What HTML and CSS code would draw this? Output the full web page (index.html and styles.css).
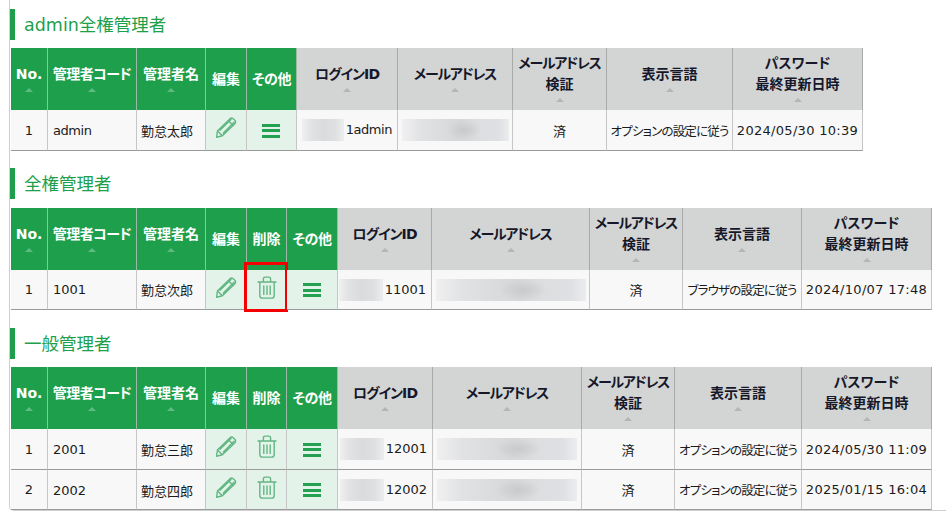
FILE: index.html
```html
<!DOCTYPE html>
<html lang="ja">
<head>
<meta charset="utf-8">
<title>管理者一覧</title>
<link rel="stylesheet" href="styles.css">
</head>
<body>
<svg class="defs" width="0" height="0" aria-hidden="true">
  <symbol id="pencil" viewBox="0 0 22 21">
    <path d="M2.4 14 14.8 1.9c1-1 2.3-1 3.4-.1l1.6 1.5c1.1 1.1 1.1 2.4.1 3.4L7.4 18.8 1.6 20.2z M2.4 14l5 4.8 M13.2 3.5l5 4.9 M5 13.2 16 2.6 M8.4 16 19 5.2"/>
  </symbol>
  <symbol id="trash" viewBox="0 0 20 23">
    <path d="M1 6h18 M6.4 5.6V2.8c0-1 .7-1.7 1.7-1.7h3.8c1 0 1.7.7 1.7 1.7v2.8 M2.8 6.2v13.2c0 1.8 1.1 2.7 2.6 2.7h9.2c1.5 0 2.6-.9 2.6-2.7V6.2 M6.8 10v8.4 M10 10v8.4 M13.2 10v8.4"/>
  </symbol>
</svg>
<main class="panel">
  <section class="group">
    <h2 class="title">admin全権管理者</h2>
    <table class="list list-a">
      <colgroup>
        <col class="c37"><col class="c89"><col class="c69"><col class="c41"><col class="c50"><col class="c101"><col class="c115"><col class="c94"><col class="c126"><col class="c130">
      </colgroup>
      <thead>
        <tr>
          <th class="g">No.<i class="sort"></i></th>
          <th class="g"><span class="t05">管理者コード</span><i class="sort"></i></th>
          <th class="g">管理者名<i class="sort"></i></th>
          <th class="g">編集</th>
          <th class="g"><span class="t05">その他</span></th>
          <th><span class="t10">ログインID</span><i class="sort"></i></th>
          <th><span class="t13">メールアドレス</span><i class="sort"></i></th>
          <th><span class="t13">メールアドレス</span><br>検証<i class="sort"></i></th>
          <th>表示言語<i class="sort"></i></th>
          <th>パスワード<br>最終更新日時<i class="sort"></i></th>
        </tr>
      </thead>
      <tbody>
        <tr>
          <td class="ctr">1</td>
          <td class="code latin-tight">admin</td>
          <td>勤怠太郎</td>
          <td class="act"><svg class="ico pen"><use href="#pencil"/></svg></td>
          <td class="act"><span class="menu"></span></td>
          <td class="id latin-tight"><span class="blur b42"></span>1admin</td>
          <td class="mail"><span class="blur b107"></span></td>
          <td class="ctr">済</td>
          <td class="ctr small">オプションの設定に従う</td>
          <td class="ctr date">2024/05/30 10:39</td>
        </tr>
      </tbody>
    </table>
  </section>

  <section class="group group-mid">
    <h2 class="title">全権管理者</h2>
    <table class="list list-b">
      <colgroup>
        <col class="c37"><col class="c89"><col class="c69"><col class="c41"><col class="c40"><col class="c51"><col class="c94"><col class="c158"><col class="c93"><col class="c119"><col class="c130">
      </colgroup>
      <thead>
        <tr>
          <th class="g">No.<i class="sort"></i></th>
          <th class="g"><span class="t05">管理者コード</span><i class="sort"></i></th>
          <th class="g">管理者名<i class="sort"></i></th>
          <th class="g">編集</th>
          <th class="g">削除</th>
          <th class="g"><span class="t05">その他</span></th>
          <th><span class="t10">ログインID</span><i class="sort"></i></th>
          <th><span class="t13">メールアドレス</span><i class="sort"></i></th>
          <th><span class="t13">メールアドレス</span><br>検証<i class="sort"></i></th>
          <th>表示言語<i class="sort"></i></th>
          <th>パスワード<br>最終更新日時<i class="sort"></i></th>
        </tr>
      </thead>
      <tbody>
        <tr>
          <td class="ctr">1</td>
          <td class="code">1001</td>
          <td>勤怠次郎</td>
          <td class="act"><svg class="ico pen"><use href="#pencil"/></svg></td>
          <td class="act marked"><svg class="ico bin"><use href="#trash"/></svg><span class="redbox"></span></td>
          <td class="act"><span class="menu"></span></td>
          <td class="id"><span class="blur b44"></span>11001</td>
          <td class="mail"><span class="blur b150"></span></td>
          <td class="ctr">済</td>
          <td class="ctr small">ブラウザの設定に従う</td>
          <td class="ctr date">2024/10/07 17:48</td>
        </tr>
      </tbody>
    </table>
  </section>

  <section class="group">
    <h2 class="title">一般管理者</h2>
    <table class="list list-b">
      <colgroup>
        <col class="c37"><col class="c89"><col class="c69"><col class="c41"><col class="c40"><col class="c51"><col class="c95"><col class="c149"><col class="c93"><col class="c127"><col class="c130">
      </colgroup>
      <thead>
        <tr>
          <th class="g">No.<i class="sort"></i></th>
          <th class="g"><span class="t05">管理者コード</span><i class="sort"></i></th>
          <th class="g">管理者名<i class="sort"></i></th>
          <th class="g">編集</th>
          <th class="g">削除</th>
          <th class="g"><span class="t05">その他</span></th>
          <th><span class="t10">ログインID</span><i class="sort"></i></th>
          <th><span class="t13">メールアドレス</span><i class="sort"></i></th>
          <th><span class="t13">メールアドレス</span><br>検証<i class="sort"></i></th>
          <th>表示言語<i class="sort"></i></th>
          <th>パスワード<br>最終更新日時<i class="sort"></i></th>
        </tr>
      </thead>
      <tbody>
        <tr>
          <td class="ctr">1</td>
          <td class="code">2001</td>
          <td>勤怠三郎</td>
          <td class="act"><svg class="ico pen"><use href="#pencil"/></svg></td>
          <td class="act"><svg class="ico bin"><use href="#trash"/></svg></td>
          <td class="act"><span class="menu"></span></td>
          <td class="id"><span class="blur b44"></span>12001</td>
          <td class="mail"><span class="blur b140"></span></td>
          <td class="ctr">済</td>
          <td class="ctr small">オプションの設定に従う</td>
          <td class="ctr date">2024/05/30 11:09</td>
        </tr>
        <tr>
          <td class="ctr">2</td>
          <td class="code">2002</td>
          <td>勤怠四郎</td>
          <td class="act"><svg class="ico pen"><use href="#pencil"/></svg></td>
          <td class="act"><svg class="ico bin"><use href="#trash"/></svg></td>
          <td class="act"><span class="menu"></span></td>
          <td class="id"><span class="blur b44"></span>12002</td>
          <td class="mail"><span class="blur b140"></span></td>
          <td class="ctr">済</td>
          <td class="ctr small">オプションの設定に従う</td>
          <td class="ctr date">2025/01/15 16:04</td>
        </tr>
      </tbody>
    </table>
  </section>
</main>
</body>
</html>
```

FILE: styles.css
```css
* { box-sizing: border-box; }

html, body { margin: 0; padding: 0; background: #fff; }

body {
  height: 524px;
  overflow: hidden;
  font-family: "DejaVu Sans", "Noto Sans CJK JP", sans-serif;
  font-size: 13px;
  color: #1b1b1b;
}

.defs { position: absolute; }

.panel {
  margin-left: 9px;
  height: 511px;
  padding: 9px 0 0 1px;
  border-left: 1px solid #cfcfcf;
  border-bottom: 1px solid #cfcfcf;
  border-bottom-left-radius: 5px;
}

.group { margin-bottom: 17px; }
.group-mid { margin-bottom: 18px; }

.title {
  margin: 0 0 8px -1px;
  height: 31px;
  padding: 1px 0 0 9px;
  border-left: 5px solid #1e9f4b;
  font-size: 17.5px;
  font-weight: 400;
  line-height: 30px;
  color: #1e9f4b;
}
.group-mid .title { margin-bottom: 9px; }

.list {
  table-layout: fixed;
  border-collapse: separate;
  border-spacing: 0;
}
.list-a { width: 852px; }
.list-b { width: 921px; }

.c37 { width: 37px; }
.c40 { width: 40px; }
.c41 { width: 41px; }
.c50 { width: 50px; }
.c51 { width: 51px; }
.c69 { width: 69px; }
.c89 { width: 89px; }
.c93 { width: 93px; }
.c94 { width: 94px; }
.c95 { width: 95px; }
.c101 { width: 101px; }
.c115 { width: 115px; }
.c119 { width: 119px; }
.c126 { width: 126px; }
.c127 { width: 127px; }
.c130 { width: 130px; }
.c149 { width: 149px; }
.c158 { width: 158px; }

.list th {
  height: 62px;
  padding: 0;
  background: #d3d5d5;
  border-right: 1px solid #a9abab;
  font-size: 14px;
  font-feature-settings: "palt";
  font-weight: 700;
  line-height: 21px;
  color: #16182a;
  text-align: center;
  vertical-align: middle;
}

.list th.g {
  background: #1e9f4b;
  border-right-color: #9cb8a6;
  color: #fff;
}

.t05 { letter-spacing: -.5px; }
.t10 { letter-spacing: -.9px; }
.t13 { letter-spacing: -1.3px; }

.sort {
  display: block;
  width: 8px;
  height: 10px;
  margin: 0 auto;
  padding-top: 3px;
}

.sort::before {
  content: "";
  display: block;
  border: 4px solid transparent;
  border-top-width: 0;
  border-bottom-color: #b3b5b6;
}

.g .sort::before { border-bottom-color: #5fbb81; }

.list td {
  height: 41px;
  padding: 0 0 0 4px;
  background: #f8f8f8;
  border-right: 1px solid #c6c6c6;
  border-bottom: 1px solid #9a9a9a;
  white-space: nowrap;
  vertical-align: middle;
}

.group-mid .list td,
.list tr + tr td { height: 40px; }

.list td.code { padding-left: 5px; }
.list td.ctr { padding: 0; text-align: center; }
.list td.small { font-size: 12.5px; font-feature-settings: "palt"; letter-spacing: -.8px; }
.list td.date { letter-spacing: .3px; }
.list td.id { padding: 0 5px 0 0; text-align: right; }
.list td.mail { padding: 0 3px 0 4px; }
.list td.latin-tight { letter-spacing: -.45px; }
.list tr + tr td { padding-top: 1px; }

.list td.act {
  position: relative;
  padding: 0;
  background: #e3f3ea;
  text-align: center;
}

.blur {
  display: inline-block;
  height: 22px;
  vertical-align: middle;
  background: linear-gradient(90deg, #f0f0f1, #e2e3e5 20%, #dadbdd 50%, #dedfe1 78%, #ecedef);
}
.id .blur { margin-right: 2px; }
.mail .blur {
  background:
    radial-gradient(ellipse 16% 45% at 58% 50%, #c9cacc, transparent),
    linear-gradient(90deg, #f0f0f1, #e1e2e4 18%, #dbdcde 38%, #d6d7d9 55%, #dddee0 72%, #dfe0e3 90%, #ebecee);
}
.b42 { width: 42px; }
.b44 { width: 44px; }
.b107 { width: 107px; }
.b140 { width: 140px; }
.b150 { width: 150px; }

.ico {
  display: inline-block;
  vertical-align: middle;
  margin-bottom: 5px;
  fill: none;
  stroke: #62b783;
  stroke-width: 1.4;
  stroke-linecap: round;
  stroke-linejoin: round;
}
.pen { width: 22px; height: 21px; }
.bin { width: 20px; height: 23px; }

.menu {
  display: inline-block;
  width: 18px;
  height: 14px;
  margin-right: 1px;
  vertical-align: middle;
  background:
    linear-gradient(#23a050, #23a050) top / 100% 3px no-repeat,
    linear-gradient(#23a050, #23a050) center / 100% 3px no-repeat,
    linear-gradient(#23a050, #23a050) bottom / 100% 3px no-repeat;
}

.redbox {
  position: absolute;
  left: -3px;
  top: -8px;
  width: 44px;
  height: 50px;
  border: 3px solid #f40000;
}
```
